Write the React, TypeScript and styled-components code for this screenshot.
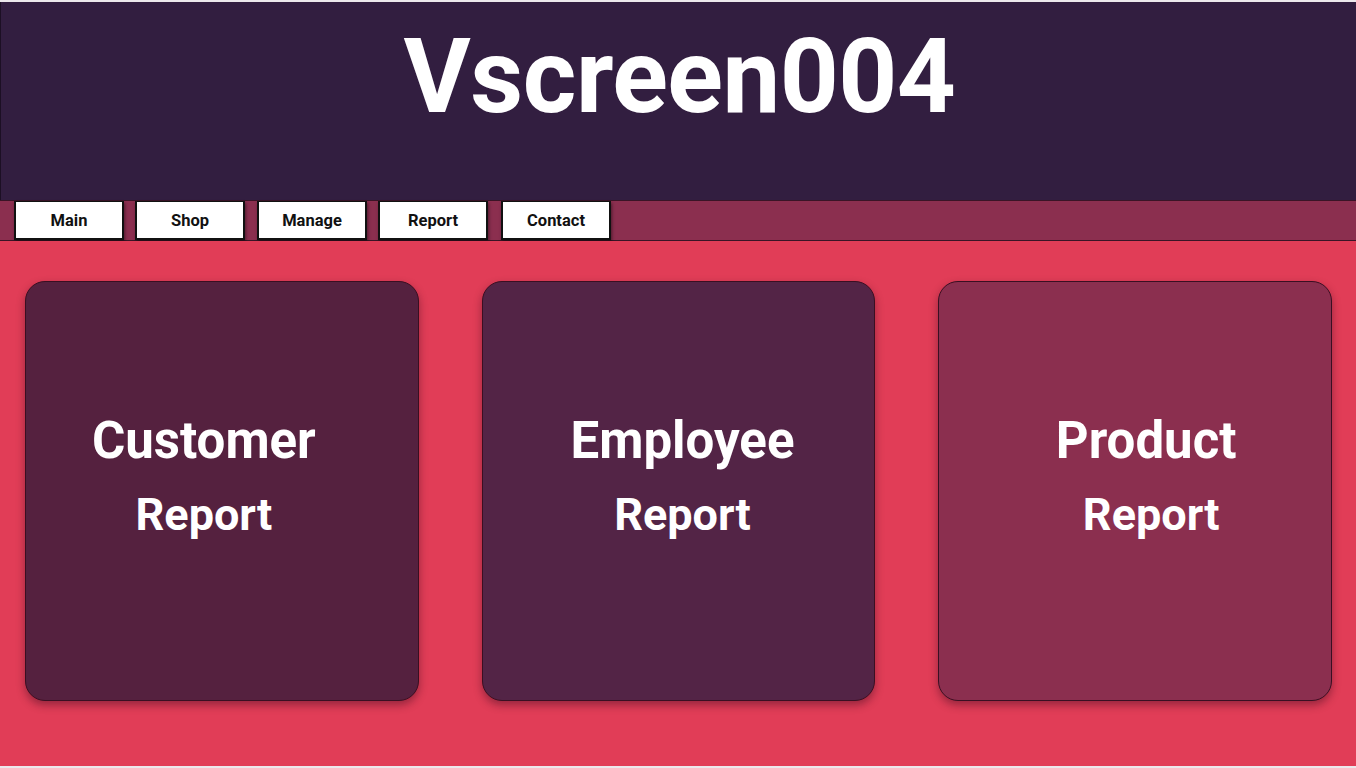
import React from "react";
import styled, { createGlobalStyle } from "styled-components";

const Global = createGlobalStyle`
  html, body {
    margin: 0;
    padding: 0;
    background: #ece8ec;
    font-family: Roboto, "Liberation Sans", Arial, sans-serif;
  }
  * { box-sizing: border-box; }
`;

const Page = styled.div`
  width: 1356px;
  height: 768px;
  padding-top: 2px;
  display: flex;
  flex-direction: column;
  background: #ece8ec;
`;

const Header = styled.header`
  height: 198px;
  background: #321e40;
  border-left: 1px solid #1c0f24;
  display: flex;
  justify-content: center;
  align-items: flex-start;
`;

const Title = styled.h1`
  margin: 0;
  margin-top: 15px;
  margin-left: 2px;
  color: #ffffff;
  font-family: Roboto, "Liberation Sans", sans-serif;
  font-weight: 700;
  font-size: 103px;
  line-height: 120px;
  letter-spacing: -0.5px;
`;

const Nav = styled.nav`
  height: 41px;
  background: #8b2f4f;
  border-top: 1px solid #3a1426;
  border-bottom: 1px solid #3a1426;
  display: flex;
  align-items: stretch;
  gap: 11px;
  padding-left: 14px;
`;

const NavButton = styled.button<{ extra?: number }>`
  width: 110px;
  height: 39px;
  margin: 0;
  background: #ffffff;
  border: 2px solid #111;
  border-top-width: 1px;
  box-shadow: 1px 2px 3px rgba(0, 0, 0, 0.45);
  font-family: Roboto, "Liberation Sans", sans-serif;
  font-weight: 700;
  font-size: 16.5px;
  color: #111;
  padding: 0;
  cursor: pointer;
  margin-right: ${(p) => p.extra ?? 0}px;
`;

const Content = styled.main`
  height: 525px;
  background: #e13d57;
  display: flex;
  gap: 63px;
  padding: 40px 24px 0 25px;
`;

const Card = styled.div<{ bg: string }>`
  width: 394px;
  height: 420px;
  background: ${(p) => p.bg};
  border: 1px solid #3a0f22;
  border-radius: 20px;
  box-shadow: 0 4px 8px rgba(60, 10, 30, 0.45);
  display: flex;
  flex-direction: column;
  align-items: center;
  justify-content: center;
  padding-bottom: 26px;
  color: #ffffff;
`;

const CardLine = styled.div<{ size: number; dx: number }>`
  font-family: Roboto, "Liberation Sans", sans-serif;
  font-weight: 700;
  font-size: ${(p) => p.size}px;
  line-height: 74px;
  white-space: nowrap;
  transform: translateX(${(p) => p.dx}px);
`;

const cards = [
  { first: "Customer", bg: "#55213f", dx1: -18, dx2: -18 },
  { first: "Employee", bg: "#532446", dx1: 4, dx2: 4 },
  { first: "Product", bg: "#8b2f4f", dx1: 11, dx2: 16 },
];

const navItems = ["Main", "Shop", "Manage", "Report", "Contact"];

export default function App() {
  return (
    <>
      <Global />
      <Page>
        <Header>
          <Title>Vscreen004</Title>
        </Header>
        <Nav>
          {navItems.map((n, i) => (
            <NavButton key={n} extra={i === 3 ? 2 : i === 1 ? 1 : 0}>
              {n}
            </NavButton>
          ))}
        </Nav>
        <Content>
          {cards.map((c) => (
            <Card key={c.first} bg={c.bg}>
              <CardLine size={51} dx={c.dx1}>{c.first}</CardLine>
              <CardLine size={45} dx={c.dx2}>Report</CardLine>
            </Card>
          ))}
        </Content>
      </Page>
    </>
  );
}
